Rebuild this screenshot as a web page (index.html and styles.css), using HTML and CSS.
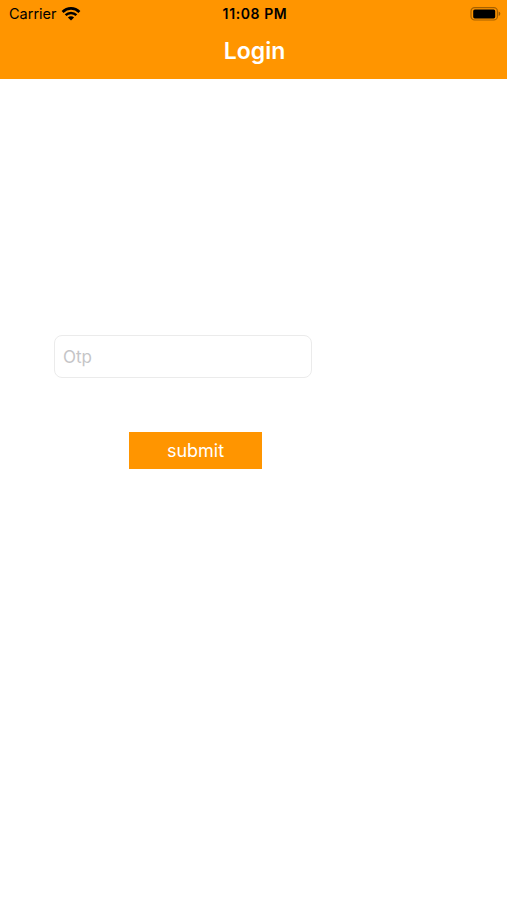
FILE: index.html
```html
<!DOCTYPE html>
<html lang="en">
<head>
    <meta charset="UTF-8">
    <meta name="viewport" content="width=device-width, initial-scale=1.0">
    <title>Login</title>
    <link rel="stylesheet" href="styles.css">
</head>
<body>
    <header class="header">
        <div class="status-bar">
            <div class="carrier">
                <span>Carrier</span>
                <svg class="wifi" viewBox="0 0 20 14" width="20" height="14">
                    <path d="M1.6 4.9a12 12 0 0 1 16.8 0" fill="none" stroke="#000" stroke-width="2.8"/>
                    <path d="M4.6 8.2a7.7 7.7 0 0 1 10.8 0" fill="none" stroke="#000" stroke-width="2.5"/>
                    <path d="M10 13.6L6.9 10.5a4.4 4.4 0 0 1 6.2 0z"/>
                </svg>
            </div>
            <span class="time">11:08 PM</span>
            <svg class="battery" viewBox="0 0 31 14" width="31" height="14">
                <rect x="1" y="0.6" width="26.4" height="12.4" rx="3.6" fill="none" stroke="#000" stroke-opacity="0.35" stroke-width="1.2"/>
                <rect x="3.2" y="2.4" width="22" height="9" rx="1.6"/>
                <path d="M28.6 4.5a2.4 2.4 0 0 1 0 4.6z" fill-opacity="0.4"/>
            </svg>
        </div>
        <h1>Login</h1>
    </header>
    <form class="login-form">
        <input type="text" class="otp" placeholder="Otp">
        <button type="button" class="submit">submit</button>
    </form>
</body>
</html>
```
FILE: styles.css
```css
* {
    box-sizing: border-box;
}
body {
    margin: 0;
    font-family: Inter, sans-serif;
    background-color: #fff;
}
.header {
    height: 79px;
    background-color: #ff9500;
}
.status-bar {
    display: grid;
    grid-template-columns: 1fr auto 1fr;
    align-items: center;
    height: 27px;
    padding: 0 6px 0 9px;
    font-size: 14.5px;
}
.carrier {
    display: flex;
    align-items: center;
    gap: 4px;
}
.time {
    font-size: 14px;
    font-weight: 600;
    letter-spacing: 0.6px;
}
.battery {
    justify-self: end;
}
h1 {
    margin: 9px 0 0;
    padding-left: 2px;
    color: #fff;
    font-size: 23px;
    font-weight: 600;
    line-height: 31px;
    text-align: center;
}
.login-form {
    display: flex;
    flex-direction: column;
    align-items: flex-start;
    padding: 256px 0 0 54px;
}
.otp {
    width: 258px;
    height: 43px;
    padding: 0 8px;
    border: 1px solid #ebebeb;
    border-radius: 8px;
    font-family: inherit;
    font-size: 17px;
}
.otp::placeholder {
    color: #c5c5c7;
}
.submit {
    width: 133px;
    height: 37px;
    margin: 54px 0 0 75px;
    padding: 0;
    border: none;
    background-color: #ff9500;
    color: #fff;
    font-family: inherit;
    font-size: 18px;
}
```
